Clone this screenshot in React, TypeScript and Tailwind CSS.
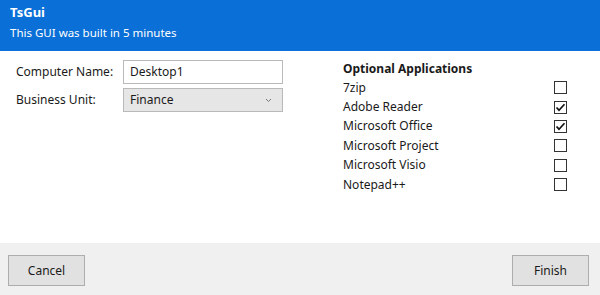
import React from "react";

const apps = [
  { name: "7zip", checked: false },
  { name: "Adobe Reader", checked: true },
  { name: "Microsoft Office", checked: true },
  { name: "Microsoft Project", checked: false },
  { name: "Microsoft Visio", checked: false },
  { name: "Notepad++", checked: false },
];

function Check({ checked }: { checked: boolean }) {
  return (
    <div className="w-[13px] h-[13px] border border-[#333333] bg-white flex items-center justify-center">
      {checked && (
        <svg width="11" height="11" viewBox="0 0 11 11">
          <path d="M1.5 5.5 L4 8.2 L9.5 2.2" fill="none" stroke="#111" strokeWidth="1.7" />
        </svg>
      )}
    </div>
  );
}

export default function App() {
  return (
    <div
      className="w-[600px] h-[295px] bg-white flex flex-col text-[12px] text-[#1a1a1a]"
      style={{ fontFamily: '"Noto Sans", "Open Sans", sans-serif' }}
    >
      <div className="h-[51px] bg-[#0a6fd6] text-white px-[10px] pt-[3px] flex flex-col">
        <div className="font-bold text-[13px] leading-[18px]">TsGui</div>
        <div className="text-[11.5px] leading-[24px]">This GUI was built in 5 minutes</div>
      </div>

      <div className="flex-1 flex pt-[9px]">
        <div className="w-[343px] pl-4 flex flex-col gap-[4px]">
          <div className="flex items-center h-[24px]">
            <div className="w-[107px]">Computer Name:</div>
            <div className="w-[160px] h-[24px] border border-[#b9b9b9] bg-white px-[6px] flex items-center">
              Desktop1
            </div>
          </div>
          <div className="flex items-center h-[24px]">
            <div className="w-[107px]">Business Unit:</div>
            <div className="w-[160px] h-[24px] border border-[#b9b9b9] bg-[#e6e6e6] px-[6px] flex items-center justify-between">
              <span>Finance</span>
              <svg width="7" height="5" viewBox="0 0 7 5" className="mr-[4px]">
                <path d="M1 1 L3.5 3.5 L6 1" fill="none" stroke="#777" strokeWidth="1" />
              </svg>
            </div>
          </div>
        </div>

        <div className="w-[224px] flex flex-col">
          <div className="font-bold leading-[18px]">Optional Applications</div>
          {apps.map((a) => (
            <div key={a.name} className="h-[19.4px] flex items-center justify-between">
              <span>{a.name}</span>
              <Check checked={a.checked} />
            </div>
          ))}
        </div>
      </div>

      <div className="h-[52px] bg-[#f0f0f0] flex items-center justify-between px-[8px] pt-[3px]">
        <button className="w-[77px] h-[31px] bg-[#e1e1e1] border border-[#adadad] text-[12px]">Cancel</button>
        <button className="w-[77px] h-[31px] bg-[#e1e1e1] border border-[#adadad] text-[12px] mr-[3px]">Finish</button>
      </div>
    </div>
  );
}
